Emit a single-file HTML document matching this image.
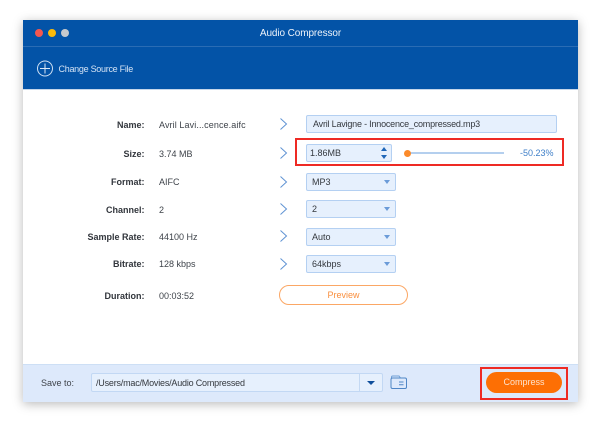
<!DOCTYPE html>
<html><head><meta charset="utf-8">
<style>
html,body{margin:0;padding:0;width:600px;height:427px;overflow:hidden;background:#fff;font-family:"Liberation Sans",sans-serif}
#all{position:absolute;left:0;top:0;width:600px;height:427px;filter:blur(.3px)}
.a{position:absolute}
#win{position:absolute;left:23px;top:20px;width:555px;height:382px;background:#fff;box-shadow:0 2px 10px rgba(0,0,0,.28)}
.t{position:absolute;font-size:9px;line-height:12px;white-space:nowrap;color:#3f444b}
.l{position:absolute;font-size:9px;line-height:12px;white-space:nowrap;color:#32363c;font-weight:bold;text-align:right;width:100px;left:44.5px}
.box{position:absolute;background:#e6f0fd;border:1px solid #b4d0f2;border-radius:2px;box-sizing:border-box}
.sel{left:306px;width:90px;height:18px}
.sel span{position:absolute;left:5px;top:2px;font-size:9px;line-height:12px;color:#34383e}
.sel i{position:absolute;right:5px;top:6px;width:0;height:0;border-left:3px solid transparent;border-right:3px solid transparent;border-top:4px solid #6b9bd8}
svg{position:absolute}
</style></head><body>
<div id="all">
<div id="win"></div>
<div class="a" style="left:23px;top:20px;width:555px;height:69px;background:#0353a7;border-bottom:1px solid #c5d6ea"></div>
<div class="a" style="left:23px;top:46px;width:555px;height:1px;background:#2a6cb4"></div>
<div class="a" style="left:35px;top:29px;width:8px;height:8px;border-radius:50%;background:#f5574f"></div>
<div class="a" style="left:48px;top:29px;width:8px;height:8px;border-radius:50%;background:#f9b90a"></div>
<div class="a" style="left:61px;top:29px;width:8px;height:8px;border-radius:50%;background:#c6c9cd"></div>
<div class="t" style="left:23px;width:555px;text-align:center;top:27px;color:#eef3fa;font-size:10px;letter-spacing:-.1px;line-height:13px">Audio Compressor</div>
<svg style="left:37px;top:60px" width="16" height="17" viewBox="0 0 16 17"><circle cx="8" cy="8.5" r="7.5" fill="none" stroke="#cfe0f3" stroke-width="1"/><path d="M8 3.5v10M3 8.5h10" stroke="#dbe7f5" stroke-width="1"/></svg>
<div class="t" style="left:58.5px;top:63px;color:#d3e2f4;font-size:9px;letter-spacing:-.28px">Change Source File</div>

<div class="l" style="top:119px">Name:</div>
<div class="l" style="top:148px">Size:</div>
<div class="l" style="top:176px">Format:</div>
<div class="l" style="top:204px">Channel:</div>
<div class="l" style="top:231px">Sample Rate:</div>
<div class="l" style="top:258px">Bitrate:</div>
<div class="l" style="top:290px">Duration:</div>

<div class="t" style="left:159px;top:119px;letter-spacing:.1px">Avril Lavi...cence.aifc</div>
<div class="t" style="left:159px;top:148px">3.74 MB</div>
<div class="t" style="left:159px;top:176px">AIFC</div>
<div class="t" style="left:159px;top:204px">2</div>
<div class="t" style="left:159px;top:231px">44100 Hz</div>
<div class="t" style="left:159px;top:258px">128 kbps</div>
<div class="t" style="left:159px;top:290px">00:03:52</div>

<svg style="left:279px;top:117px" width="10" height="14" viewBox="0 0 10 14"><path d="M1.5 1.5 7.5 7 1.5 12.5" fill="none" stroke="#5f93d3" stroke-width="1"/></svg>
<svg style="left:279px;top:146px" width="10" height="14" viewBox="0 0 10 14"><path d="M1.5 1.5 7.5 7 1.5 12.5" fill="none" stroke="#5f93d3" stroke-width="1"/></svg>
<svg style="left:279px;top:175px" width="10" height="14" viewBox="0 0 10 14"><path d="M1.5 1.5 7.5 7 1.5 12.5" fill="none" stroke="#5f93d3" stroke-width="1"/></svg>
<svg style="left:279px;top:202px" width="10" height="14" viewBox="0 0 10 14"><path d="M1.5 1.5 7.5 7 1.5 12.5" fill="none" stroke="#5f93d3" stroke-width="1"/></svg>
<svg style="left:279px;top:229px" width="10" height="14" viewBox="0 0 10 14"><path d="M1.5 1.5 7.5 7 1.5 12.5" fill="none" stroke="#5f93d3" stroke-width="1"/></svg>
<svg style="left:279px;top:257px" width="10" height="14" viewBox="0 0 10 14"><path d="M1.5 1.5 7.5 7 1.5 12.5" fill="none" stroke="#5f93d3" stroke-width="1"/></svg>

<div class="box" style="left:306px;top:115px;width:251px;height:18px"><span class="t" style="left:6px;top:2px;color:#34383e;letter-spacing:-.2px">Avril Lavigne - Innocence_compressed.mp3</span></div>

<div class="a" style="left:295px;top:138px;width:269px;height:28px;border:2px solid #ee2a24;box-sizing:border-box"></div>
<div class="box" style="left:306px;top:144px;width:86px;height:18px"><span class="t" style="left:3px;top:2px;color:#34383e">1.86MB</span></div>
<div class="a" style="left:381px;top:147px;width:0;height:0;border-left:3.5px solid transparent;border-right:3.5px solid transparent;border-bottom:4px solid #1f66b8"></div>
<div class="a" style="left:381px;top:155px;width:0;height:0;border-left:3.5px solid transparent;border-right:3.5px solid transparent;border-top:4px solid #1f66b8"></div>
<div class="a" style="left:407px;top:152px;width:97px;height:2px;background:#b4cfee"></div>
<div class="a" style="left:403.5px;top:149.5px;width:7px;height:7px;border-radius:50%;background:#fb8a2a"></div>
<div class="t" style="left:520px;top:147px;color:#3f7fc8">-50.23%</div>

<div class="box sel" style="top:173px"><span>MP3</span><i></i></div>
<div class="box sel" style="top:200px"><span>2</span><i></i></div>
<div class="box sel" style="top:228px"><span>Auto</span><i></i></div>
<div class="box sel" style="top:255px"><span>64kbps</span><i></i></div>

<div class="a" style="left:279px;top:285px;width:129px;height:20px;border:1px solid #fba765;border-radius:10px;box-sizing:border-box;text-align:center;font-size:9px;line-height:18px;color:#f98f3e">Preview</div>

<div class="a" style="left:23px;top:364px;width:555px;height:38px;background:#dde9fb;border-top:1px solid #cddff5;box-sizing:border-box"></div>
<div class="t" style="left:41px;top:377px">Save to:</div>
<div class="box" style="left:91px;top:373px;width:292px;height:19px;background:#e6f0fd;border-color:#c2d8f4"><span class="t" style="left:4px;top:3px;color:#34383e;letter-spacing:-.2px">/Users/mac/Movies/Audio Compressed</span></div>
<div class="a" style="left:359px;top:374px;width:1px;height:17px;background:#c4d9f3"></div>
<div class="a" style="left:367px;top:381px;width:0;height:0;border-left:4px solid transparent;border-right:4px solid transparent;border-top:4.5px solid #0f4f9c"></div>
<svg style="left:390px;top:375px" width="18" height="15" viewBox="0 0 18 15"><path d="M1.5 3.5V2.2Q1.5 1 2.7 1H9l1.5 2" fill="none" stroke="#6f9fd6" stroke-width="1"/><rect x="1" y="3" width="15.5" height="10.5" rx="1.5" fill="none" stroke="#4f86c6" stroke-width="1"/><path d="M9 7h4.5M9 9.8h4.5" stroke="#4f86c6" stroke-width="1"/></svg>

<div class="a" style="left:480px;top:367px;width:88px;height:33px;border:2px solid #ee2a24;box-sizing:border-box"></div>
<div class="a" style="left:486px;top:372px;width:76px;height:21px;border-radius:11px;background:#fd6f04;text-align:center;font-size:9px;line-height:21px;color:#fde3cf">Compress</div>
</div>
</body></html>
